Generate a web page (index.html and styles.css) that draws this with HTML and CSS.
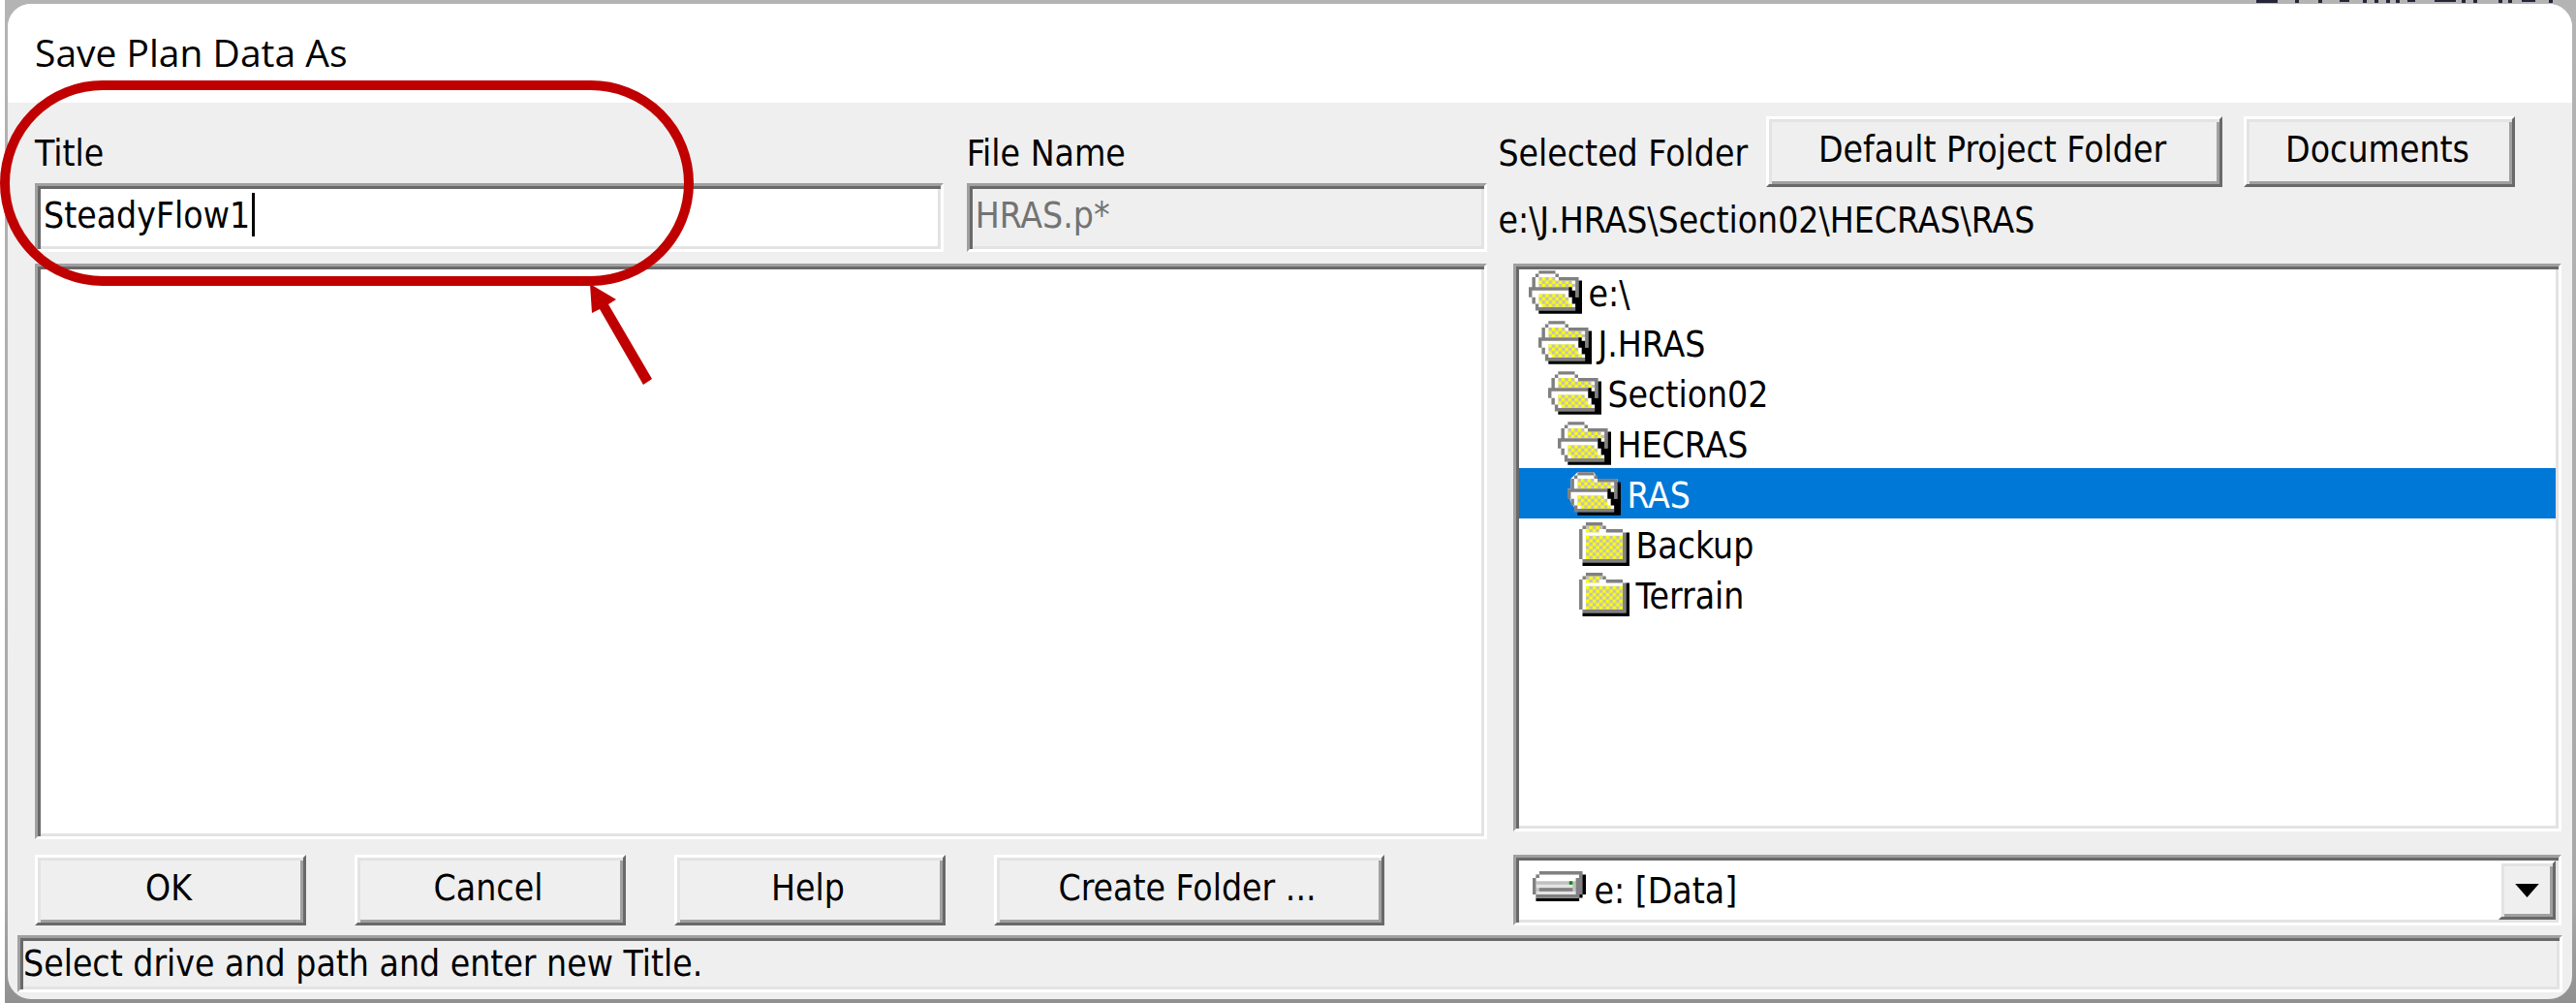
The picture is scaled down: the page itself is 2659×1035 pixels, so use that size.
FILE: index.html
```
<!DOCTYPE html>
<html lang="en">
<head>
<meta charset="utf-8">
<title>Save Plan Data As</title>
<link rel="stylesheet" href="styles.css">
</head>
<body>
<svg class="defs" width="0" height="0" aria-hidden="true">
  <defs>
    <pattern id="dither" width="2" height="2" patternUnits="userSpaceOnUse">
      <path fill="#c0c0c0" d="M0 0h2v2h-2z"/>
      <path fill="#ff0" d="M0 0h1v1h-1zM1 1h1v1h-1z"/>
    </pattern>
    <symbol id="folder-open" viewBox="0 0 16 13">
      <path fill="#fff" d="M3 0h5l1 2h6v10H3L1 9 0 6V5h1V2z"/>
      <path fill="url(#dither)" d="M3 2h5v1h5v1h1v1H3z"/>
      <path fill="url(#dither)" d="M3 7h8v1h1v2h1v1H4v-1H3z"/>
      <path fill="#808080" d="M3 0h5v1H3zM2 1h1v1H2zM8 1h1v1H8zM1 2h1v3H1zM9 2h6v1H9zM14 3h1v5h-1zM0 5h12v1H0zM0 6h1v2H0zM1 8h1v2H1zM2 10h1v2H2zM3 11h11v1H3z"/>
      <path fill="#000" d="M15 3h1v10H3v-1h12zM12 5h1v1h1v2h1v4h-1v-2h-1V8h-1z"/>
    </symbol>
    <symbol id="folder-closed" viewBox="0 0 15 13">
      <path fill="#fff" d="M2 0h5l1 2h6v10H1L0 11V2z"/>
      <path fill="url(#dither)" d="M2 1h5v1H2zM2 4h11v7H2zM2 2h4v1H2z"/>
      <path fill="#808080" d="M2 0h5v1H2zM1 1h1v1H1zM7 1h1v1H7zM0 2h1v9H0zM8 2h5v1H8zM13 3h1v8h-1zM1 11h13v1H1z"/>
      <path fill="#000" d="M14 3h1v10H1v-1h13z"/>
    </symbol>
    <symbol id="drive" viewBox="0 0 16 9">
      <path fill="#000" d="M15 1h1v6h-1v1h-1v1H1V8h13V1z"/>
      <path fill="#c0c0c0" d="M1 1h13v7H1z"/>
      <path fill="#fff" d="M2 1h12v1h-1v1H1V2h1z"/>
      <path fill="#e4e4e4" d="M1 4h11v1H1zM1 6h12v1H1z"/>
      <path fill="#808080" d="M2 0h13v1H2zM1 1h1v1H1zM0 2h1v5H0zM1 7h12v1H1zM2 5h10v1H2zM14 1h1v6h-1zM13 2h1v6h-1z"/>
      <path fill="#008a00" d="M11 3h1v1h-1z"/>
    </symbol>
  </defs>
</svg>

<main class="dialog">
  <header class="titlebar"><h1>Save Plan Data As</h1></header>

  <form class="content">
    <section class="files">
      <div class="names">
        <div class="field field-title">
          <label for="plan-title">Title</label>
          <div class="caret-box">
            <input id="plan-title" class="sunken text" type="text" value="SteadyFlow1">
            <span class="caret"></span>
          </div>
        </div>
        <div class="field field-file">
          <label for="file-name">File Name</label>
          <input id="file-name" class="sunken text" type="text" value="HRAS.p*" disabled>
        </div>
      </div>
      <div class="sunken list" role="listbox" aria-label="Plans"></div>
      <div class="actions">
        <button type="button" class="raised">OK</button>
        <button type="button" class="raised">Cancel</button>
        <button type="button" class="raised">Help</button>
        <button type="button" class="raised wide">Create Folder ...</button>
      </div>
    </section>

    <section class="folders">
      <div class="folder-bar">
        <span class="folder-label">Selected Folder</span>
        <button type="button" class="raised default-folder">Default Project Folder</button>
        <button type="button" class="raised">Documents</button>
      </div>
      <p class="path">e:\J.HRAS\Section02\HECRAS\RAS</p>
      <ul class="sunken list tree" role="listbox" aria-label="Folders">
        <li class="l0" role="option"><svg class="open"><use href="#folder-open"/></svg>e:\</li>
        <li class="l1" role="option"><svg class="open"><use href="#folder-open"/></svg>J.HRAS</li>
        <li class="l2" role="option"><svg class="open"><use href="#folder-open"/></svg>Section02</li>
        <li class="l3" role="option"><svg class="open"><use href="#folder-open"/></svg>HECRAS</li>
        <li class="l4 selected" role="option" aria-selected="true"><svg class="open"><use href="#folder-open"/></svg>RAS</li>
        <li class="l5" role="option"><svg class="closed"><use href="#folder-closed"/></svg>Backup</li>
        <li class="l5" role="option"><svg class="closed"><use href="#folder-closed"/></svg>Terrain</li>
      </ul>
      <div class="drive">
        <select class="sunken" aria-label="Drive"><option>e: [Data]</option></select>
        <svg class="drive-icon" aria-hidden="true"><use href="#drive"/></svg>
        <span class="raised drop"><svg viewBox="0 0 14 8"><path d="M0 0h14L7 8z"/></svg></span>
      </div>
    </section>
  </form>

  <footer class="sunken status">Select drive and path and enter new Title.</footer>
</main>

<svg class="callout" width="720" height="400" viewBox="0 0 720 400" aria-hidden="true">
  <rect x="5" y="88" width="706" height="202" rx="101" fill="none" stroke="#c00000" stroke-width="10"/>
  <path fill="#c00000" d="M609 293L636 309 628 314 673 391 664 397 619 319 611 323z"/>
</svg>
<svg class="behind" width="310" height="3" viewBox="0 0 310 3" aria-hidden="true">
  <path fill="#26263a" d="M0 0h22v3H0zM40 0h4v3h-4zM64 0h4v3h-4zM86 0h10v2H86zM110 0h4v3h-4zM122 0h4v3h-4zM134 0h4v3h-4zM144 0h4v3h-4zM156 0h8v2h-8zM184 0h22v2h-22zM212 0h4v3h-4zM224 0h4v3h-4zM250 0h4v3h-4zM260 0h4v3h-4zM274 0h14v2h-14zM302 0h4v3h-4z"/>
</svg>
</body>
</html>
```
FILE: styles.css
```
* {
  box-sizing: border-box;
}

body {
  margin: 0;
  min-height: 100vh;
  display: flex;
  padding: 4px 4px 4px 8px;
  background: linear-gradient(to right, #fff 5px, transparent 5px),
    linear-gradient(#b4b4b4, #a8a8a8 90%, #909090);
  color: #000;
  font: 37px/44px "DejaVu Sans Condensed", "DejaVu Sans", sans-serif;
  font-stretch: condensed;
}

.defs,
.callout,
.behind {
  position: absolute;
  pointer-events: none;
}

.callout {
  left: 0;
  top: 0;
}

.behind {
  right: 20px;
  top: 0;
}

.dialog {
  flex: 1;
  display: flex;
  flex-direction: column;
  background: #efefef;
  border-radius: 24px;
  overflow: hidden;
}

.titlebar {
  background: #fff;
  padding: 24px 28px 26px;
}

h1 {
  margin: 0;
  font: 39px/52px "Open Sans", "Noto Sans", sans-serif;
}

.content {
  flex: 1;
  display: grid;
  grid-template-columns: minmax(0, 1500fr) minmax(0, 1098fr);
  column-gap: 11px;
  padding: 14px 11px 10px 28px;
}

.files,
.folders {
  display: flex;
  flex-direction: column;
  min-width: 0;
}

.sunken {
  border: 3px solid;
  border-color: #a0a0a0 #fff #fff #a0a0a0;
  box-shadow: inset 3px 3px #696969, inset -3px -3px #e3e3e3;
  border-radius: 0;
  background: #fff;
  color: #000;
}

.raised {
  border: 3px solid;
  border-color: #fff #696969 #696969 #fff;
  box-shadow: inset 3px 3px #e3e3e3, inset -3px -3px #a0a0a0;
  border-radius: 0;
  background: #efefef;
  color: #000;
}

button {
  font: inherit;
  height: 73px;
  padding: 0 4px 4px 0;
  width: 280px;
  white-space: nowrap;
}

.names {
  display: flex;
  gap: 24px;
  padding-top: 17px;
}

.field {
  display: flex;
  flex-direction: column;
  gap: 8px;
  min-width: 0;
}

.field-title {
  flex: 938;
}

.field-file {
  flex: 538;
}

.text {
  width: 100%;
  height: 71px;
  padding: 0 6px 4px;
  font: inherit;
}

.text:disabled {
  background: #efefef;
  color: #737373;
}

.caret-box {
  position: relative;
  display: flex;
}

.caret {
  position: absolute;
  left: 224px;
  top: 10px;
  width: 3px;
  height: 45px;
  background: #000;
}

.list {
  flex: 1;
  margin: 12px 0 0;
}

.actions {
  display: flex;
  gap: 50px;
  padding-top: 16px;
}

.actions .wide {
  width: 403px;
}

.folder-bar {
  display: flex;
  align-items: center;
}

.folder-label {
  flex: 1;
  padding-top: 4px;
}

.default-folder {
  width: 471px;
  margin-right: 22px;
}

.folder-bar .raised:last-child {
  margin-right: 48px;
}

.path {
  margin: 13px 0 0;
}

.tree {
  margin: 22px 0 0 16px;
  padding: 0 3px;
  list-style: none;
}

.tree li {
  display: flex;
  gap: 6px;
  height: 52px;
  line-height: 58px;
}

.tree svg {
  margin-top: 4px;
}

.tree .selected {
  background: #0078d7;
  color: #fff;
}

.l0 { padding-left: 10px; }
.l1 { padding-left: 20px; }
.l2 { padding-left: 30px; }
.l3 { padding-left: 40px; }
.l4 { padding-left: 50px; }
.l5 { padding-left: 62px; }

.open {
  width: 55px;
  height: 45px;
}

.closed {
  width: 52px;
  height: 45px;
}

.drive {
  position: relative;
  display: flex;
  margin: 24px 0 0 16px;
}

select {
  appearance: none;
  width: 100%;
  height: 73px;
  padding: 2px 70px 0 80px;
  font: inherit;
}

.drive-icon {
  position: absolute;
  left: 20px;
  top: 17px;
  width: 55px;
  height: 31px;
}

.drop {
  position: absolute;
  right: 6px;
  top: 6px;
  bottom: 6px;
  width: 59px;
  display: flex;
  align-items: center;
  justify-content: center;
  pointer-events: none;
}

.drop svg {
  width: 25px;
  height: 14px;
}

.status {
  margin: 0 10px 7px;
  padding: 5px 3px 4px;
  background: #efefef;
}
```
